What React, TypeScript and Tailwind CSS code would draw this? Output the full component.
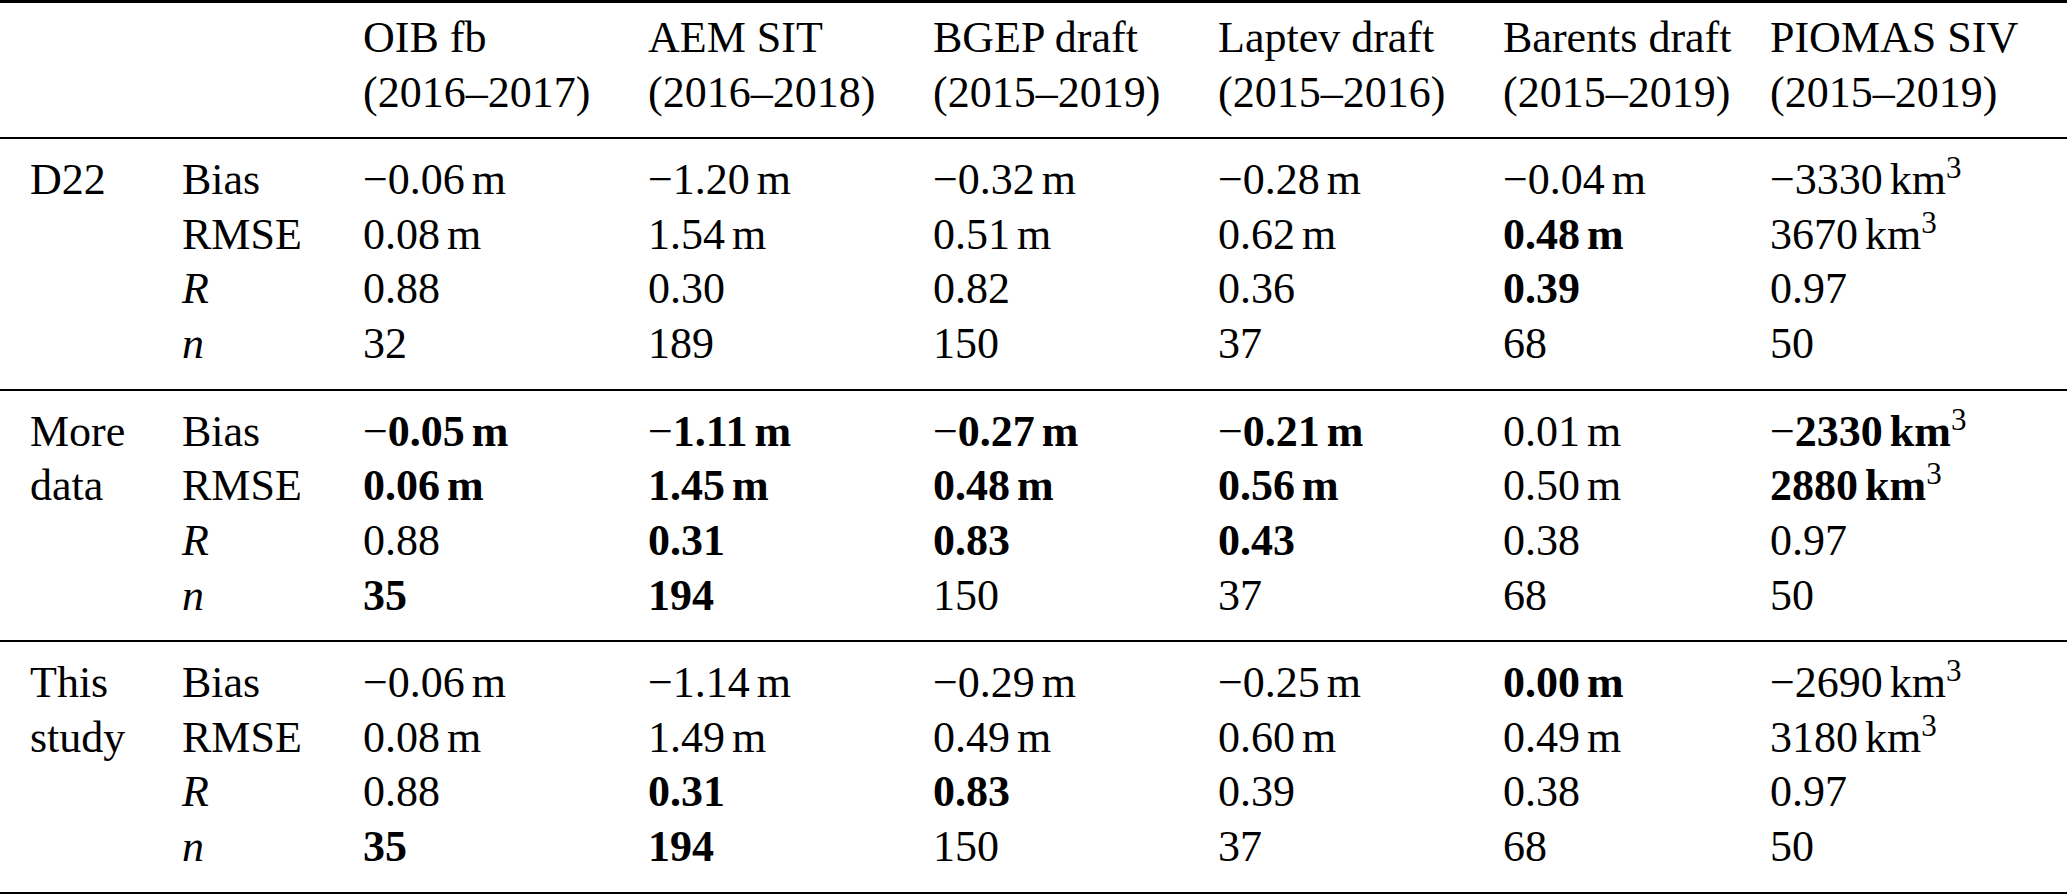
import React from 'react';

type Group = {
  label: string[];
  rows: string[][];
};

const headers: [string, string][] = [
  ['OIB fb', '(2016–2017)'],
  ['AEM SIT', '(2016–2018)'],
  ['BGEP draft', '(2015–2019)'],
  ['Laptev draft', '(2015–2016)'],
  ['Barents draft', '(2015–2019)'],
  ['PIOMAS SIV', '(2015–2019)'],
];

const stats = ['Bias', 'RMSE', 'R', 'n'];

// "*" marks a bold (best) value
const groups: Group[] = [
  {
    label: ['D22'],
    rows: [
      ['-0.06 m', '-1.20 m', '-0.32 m', '-0.28 m', '-0.04 m', '-3330 km3'],
      ['0.08 m', '1.54 m', '0.51 m', '0.62 m', '*0.48 m', '3670 km3'],
      ['0.88', '0.30', '0.82', '0.36', '*0.39', '0.97'],
      ['32', '189', '150', '37', '68', '50'],
    ],
  },
  {
    label: ['More', 'data'],
    rows: [
      ['*-0.05 m', '*-1.11 m', '*-0.27 m', '*-0.21 m', '0.01 m', '*-2330 km3'],
      ['*0.06 m', '*1.45 m', '*0.48 m', '*0.56 m', '0.50 m', '*2880 km3'],
      ['0.88', '*0.31', '*0.83', '*0.43', '0.38', '0.97'],
      ['*35', '*194', '150', '37', '68', '50'],
    ],
  },
  {
    label: ['This', 'study'],
    rows: [
      ['-0.06 m', '-1.14 m', '-0.29 m', '-0.25 m', '*0.00 m', '-2690 km3'],
      ['0.08 m', '1.49 m', '0.49 m', '0.60 m', '0.49 m', '3180 km3'],
      ['0.88', '*0.31', '*0.83', '0.39', '0.38', '0.97'],
      ['*35', '*194', '150', '37', '68', '50'],
    ],
  },
];

const gridCols =
  'grid grid-cols-[152px_181px_285px_285px_285px_285px_267px_1fr] pl-[30px]';

const Value: React.FC<{ raw: string }> = ({ raw }) => {
  const bold = raw.startsWith('*');
  let text = bold ? raw.slice(1) : raw;
  const negative = text.startsWith('-');
  if (negative) text = text.slice(1);
  const [num, unit] = text.split(' ');

  return (
    <span className="whitespace-nowrap">
      {negative && <span className="font-normal">−</span>}
      <span className={bold ? 'font-bold' : 'font-normal'}>
        {num}
        {unit === 'm' && <span className="ml-[7px]">m</span>}
        {unit === 'km3' && (
          <>
            <span className="ml-[7px]">km</span>
            <span className="relative top-[-16px] text-[31px] leading-none font-normal">3</span>
          </>
        )}
      </span>
    </span>
  );
};

const StatLabel: React.FC<{ name: string }> = ({ name }) =>
  name === 'R' || name === 'n' ? <span className="italic">{name}</span> : <span>{name}</span>;

export default function App() {
  return (
    <div
      className="w-[2067px] h-[894px] bg-white text-black text-[44px] leading-[54.7px]"
      style={{ fontFamily: '"Liberation Serif", "Times New Roman", serif' }}
    >
      <div className="h-[3px] bg-black" />

      {/* header */}
      <div className={`${gridCols} pt-[8px] pb-[16.6px]`}>
        <div />
        <div />
        {headers.map(([title, years]) => (
          <div key={title} className="whitespace-nowrap">
            <div>{title}</div>
            <div>{years}</div>
          </div>
        ))}
      </div>

      {groups.map((group, gi) => (
        <React.Fragment key={group.label.join(' ')}>
          <div className="h-[2px] bg-black" />
          <div className={`${gridCols} pt-[14px] pb-[16.7px]`}>
            {group.rows.map((row, ri) => (
              <React.Fragment key={ri}>
                <div>{group.label[ri] ?? ''}</div>
                <div>
                  <StatLabel name={stats[ri]} />
                </div>
                {row.map((cell, ci) => (
                  <div key={ci}>
                    <Value raw={cell} />
                  </div>
                ))}
              </React.Fragment>
            ))}
          </div>
          {gi === groups.length - 1 && <div className="h-[3px] bg-black" />}
        </React.Fragment>
      ))}
    </div>
  );
}
